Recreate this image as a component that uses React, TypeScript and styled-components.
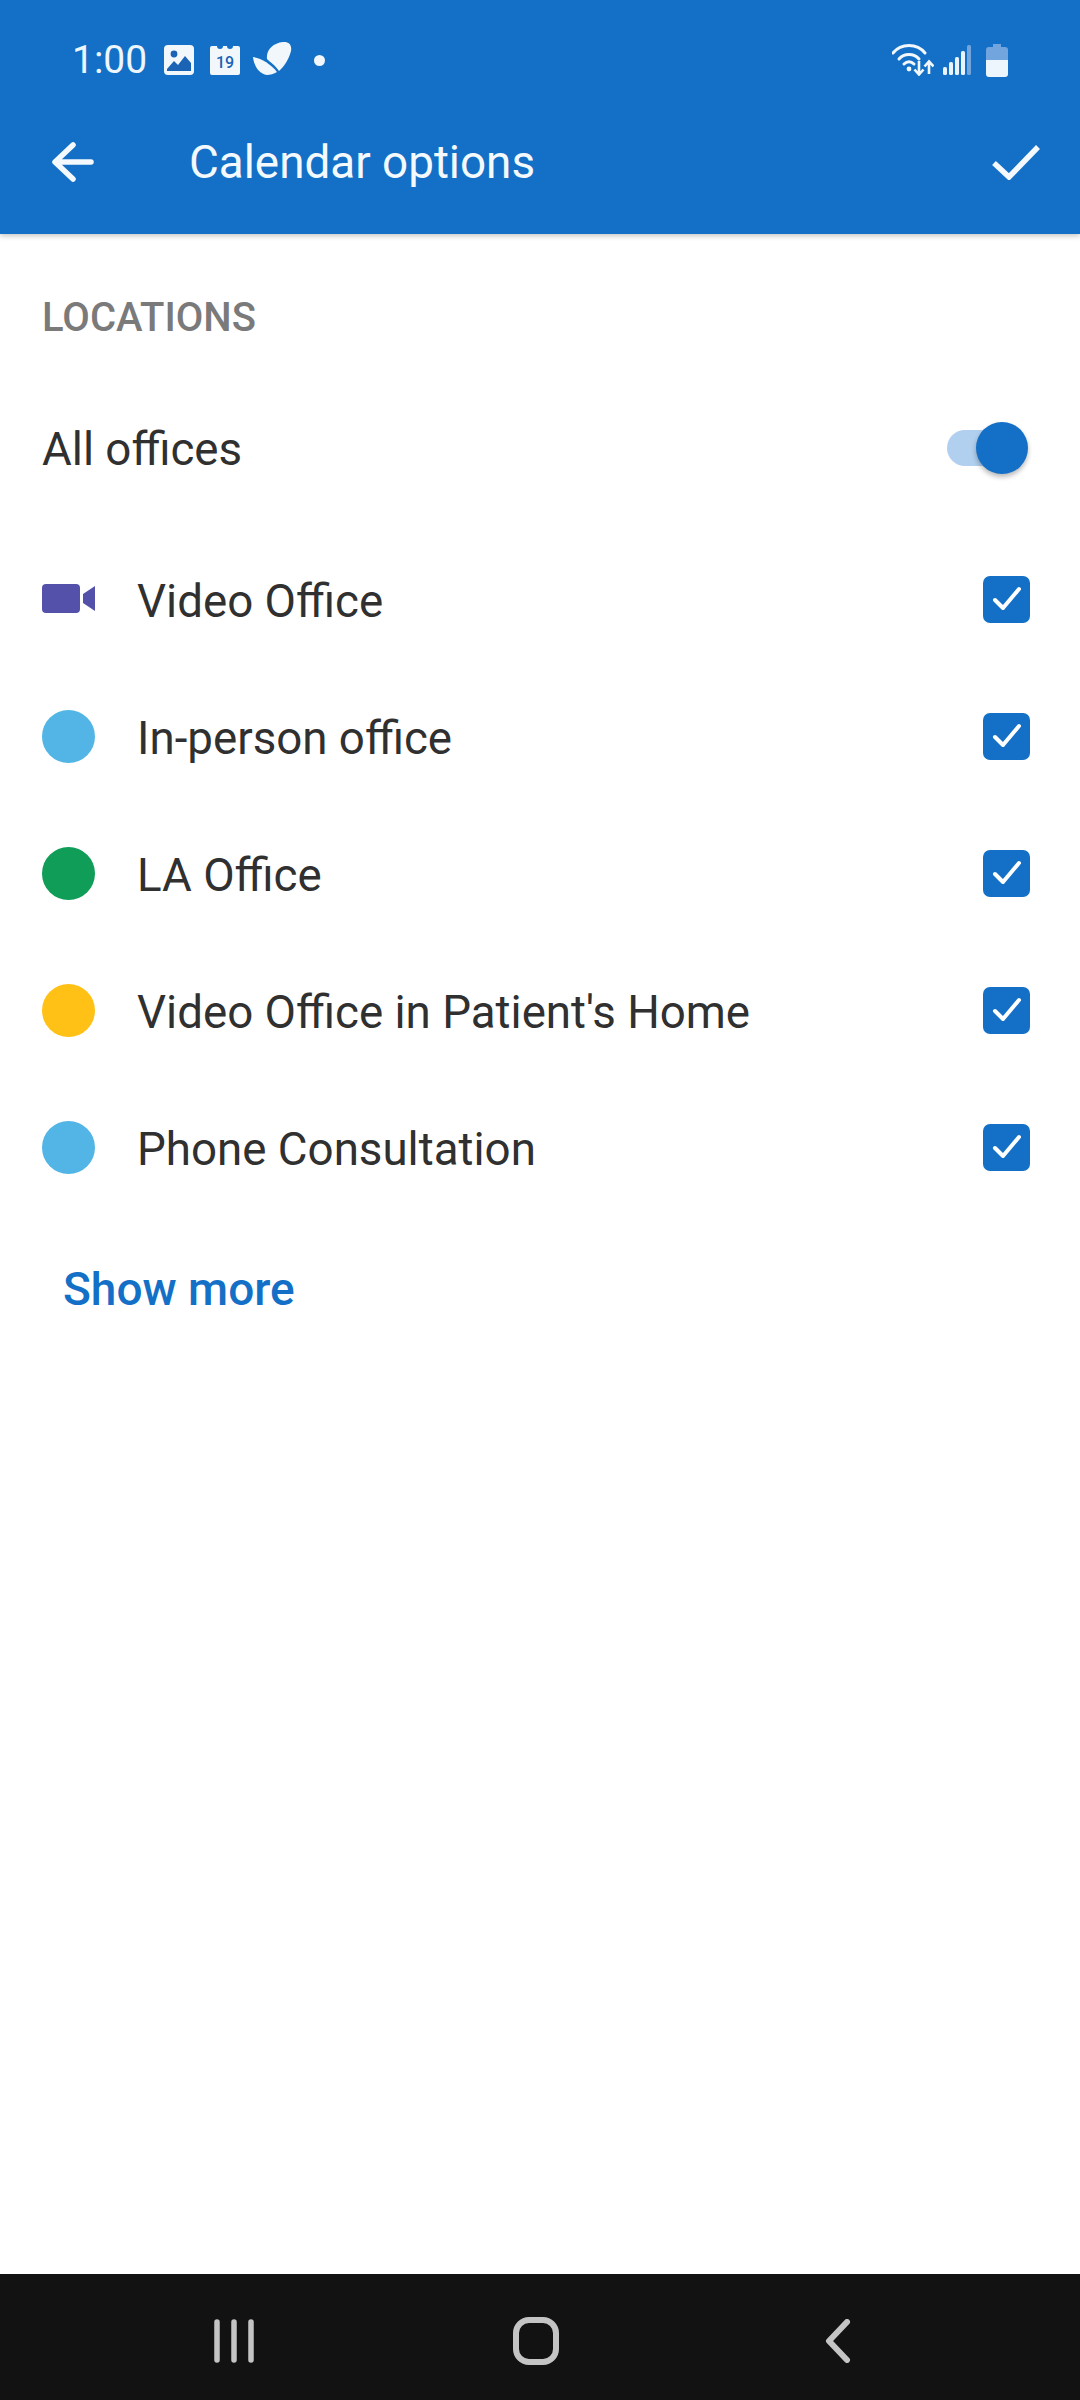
import React from 'react';
import styled, { createGlobalStyle } from 'styled-components';

const Global = createGlobalStyle`
    html, body {
        margin: 0;
        padding: 0;
        background: #ffffff;
    }
    body {
        font-family: Roboto, "Liberation Sans", sans-serif;
    }
`;

const locations = [
    { name: 'Video Office', color: '#5451ab', video: true },
    { name: 'In-person office', color: '#52b5e5' },
    { name: 'LA Office', color: '#0f9d58' },
    { name: "Video Office in Patient's Home", color: '#ffc116' },
    { name: 'Phone Consultation', color: '#52b5e5' },
];

function App() {
    return (
        <Screen>
            <Global />
            <Header>
                <StatusBar>
                    <Time>1:00</Time>
                    <NoticeIcons>
                        <svg width="30" height="30" viewBox="0 0 30 30">
                            <rect width="30" height="30" rx="4" fill="#f2f7fc" />
                            <circle cx="10" cy="9" r="3.4" fill="#1a63b5" />
                            <path d="M3 24 L10 16 L14 20 L21 11 L27 18 V26 H3 Z" fill="#1a63b5" />
                        </svg>
                        <CalendarNotice>
                            <svg width="30" height="30" viewBox="0 0 30 30">
                                <path d="M2 1 H7 a3 3 0 0 0 6 0 H17 a3 3 0 0 0 6 0 H28 a2 2 0 0 1 2 2 V28 a2 2 0 0 1 -2 2 H2 a2 2 0 0 1 -2 -2 V3 a2 2 0 0 1 2 -2 Z" fill="#f2f7fc" />
                            </svg>
                            <CalendarDay>19</CalendarDay>
                        </CalendarNotice>
                        <LeafIcon width="39" height="33" viewBox="0 0 39 33">
                            <path d="M14 17 C13 8 20 1 30 0 C36 -0.5 39 3 38 9 C36 17 31 25 26 29 C23 24 17 20 14 17 Z" fill="#f2f7fc" />
                            <path d="M0 15 C8 16 18 22 24 30 C21 32 17 33 14 33 C6 32 1 24 0 15 Z" fill="#f2f7fc" />
                        </LeafIcon>
                        <NoticeDot />
                    </NoticeIcons>
                    <SystemIcons>
                        <svg width="42" height="32" viewBox="0 0 42 32">
                            <g fill="none" stroke="#f2f7fc" strokeWidth="3" strokeLinecap="round">
                                <path d="M1 9 C9 -1 25 -1 33 9" />
                                <path d="M7 15 C12 9 22 9 27 15" />
                                <path d="M12 20 C15 17 19 17 22 20" />
                            </g>
                            <circle cx="17" cy="25" r="2.4" fill="#f2f7fc" />
                            <g fill="none" stroke="#f2f7fc" strokeWidth="2.6">
                                <path d="M27 17 V30 M22.5 25.5 L27 30.5 L31.5 25.5" />
                                <path d="M37 30 V18 M32.5 22.5 L37 17.5 L41.5 22.5" />
                            </g>
                        </svg>
                        <svg width="28" height="31" viewBox="0 0 28 31">
                            <rect x="0" y="22" width="4" height="8" rx="1.5" fill="#eaf3fb" />
                            <rect x="6" y="17" width="4" height="13" rx="1.5" fill="#eaf3fb" />
                            <rect x="12" y="12" width="4" height="18" rx="1.5" fill="#eaf3fb" />
                            <rect x="18" y="6" width="4" height="24" rx="1.5" fill="#eaf3fb" />
                            <rect x="24" y="0" width="4" height="30" rx="1.5" fill="#72a5de" />
                        </svg>
                        <svg width="22" height="33" viewBox="0 0 22 33">
                            <path d="M7 0 H15 V3 H19 a3 3 0 0 1 3 3 V16 H0 V6 a3 3 0 0 1 3 -3 H7 Z" fill="#72a5de" />
                            <path d="M0 16 H22 V30 a3 3 0 0 1 -3 3 H3 a3 3 0 0 1 -3 -3 Z" fill="#eef6fd" />
                        </svg>
                    </SystemIcons>
                </StatusBar>
                <Toolbar>
                    <BackButton width="42" height="42" viewBox="0 0 42 42">
                        <path d="M39 21 H4 M21 4 L3 21 L21 38" />
                    </BackButton>
                    <Title>Calendar options</Title>
                    <DoneButton width="48" height="36" viewBox="0 0 48 36">
                        <path d="M2 19 L17 33 L46 3" />
                    </DoneButton>
                </Toolbar>
            </Header>

            <Content>
                <SectionLabel>LOCATIONS</SectionLabel>
                <AllRow>
                    <AllLabel>All offices</AllLabel>
                    <Switch>
                        <SwitchKnob />
                    </Switch>
                </AllRow>
                <LocationList>
                    {locations.map((loc) => (
                        <LocationRow key={loc.name}>
                            <LocationMark>
                                {loc.video ? (
                                    <svg width="54" height="30" viewBox="0 0 54 30">
                                        <rect x="0" y="0" width="38" height="29" rx="4" fill={loc.color} />
                                        <path d="M41 10 L53 2 V27 L41 19 Z" fill={loc.color} />
                                    </svg>
                                ) : (
                                    <Dot $color={loc.color} />
                                )}
                            </LocationMark>
                            <LocationName>{loc.name}</LocationName>
                            <Checkbox>
                                <svg width="30" height="26" viewBox="0 0 30 26">
                                    <path d="M3 14 L11 22 L27 3" />
                                </svg>
                            </Checkbox>
                        </LocationRow>
                    ))}
                </LocationList>
                <ShowMore>Show more</ShowMore>
            </Content>

            <NavBar>
                <NavSlot>
                    <svg width="40" height="44" viewBox="0 0 40 44" fill="none" stroke="#c4c4c4" strokeWidth="5.5" strokeLinecap="round">
                        <path d="M3 3 V41 M20 3 V41 M37 3 V41" />
                    </svg>
                </NavSlot>
                <NavSlot>
                    <svg width="46" height="48" viewBox="0 0 46 48" fill="none" stroke="#c4c4c4" strokeWidth="6">
                        <rect x="3" y="3" width="40" height="42" rx="13" />
                    </svg>
                </NavSlot>
                <NavSlot>
                    <svg width="26" height="44" viewBox="0 0 26 44" fill="none" stroke="#c4c4c4" strokeWidth="6" strokeLinecap="round" strokeLinejoin="round">
                        <path d="M22 3 L4 22 L22 41" />
                    </svg>
                </NavSlot>
            </NavBar>
        </Screen>
    );
}

const Screen = styled.div`
    display: flex;
    flex-direction: column;
    width: 1080px;
    height: 2400px;
    background: #ffffff;
    overflow: hidden;
`;

// header
const Header = styled.header`
    flex: none;
    height: 234px;
    background: #1370c6;
    box-shadow: 0 2px 5px rgba(0, 0, 0, 0.22);
    position: relative;
`;
const StatusBar = styled.div`
    display: flex;
    align-items: center;
    height: 120px;
    padding: 0 72px 0 72px;
    box-sizing: border-box;
`;
const Time = styled.span`
    width: 92px;
    font-size: 39px;
    color: #eef6fd;
`;
const NoticeIcons = styled.div`
    display: flex;
    align-items: center;
    gap: 16px;
    flex: 1;
`;
const CalendarNotice = styled.div`
    position: relative;
    width: 30px;
    height: 30px;
    margin-right: -3px;
`;
const CalendarDay = styled.span`
    position: absolute;
    left: 0;
    right: 0;
    top: 9px;
    text-align: center;
    font-size: 16px;
    font-weight: 500;
    line-height: 18px;
    color: #1a63b5;
`;
const LeafIcon = styled.svg`
    margin-top: -3px;
`;
const NoticeDot = styled.span`
    width: 11px;
    height: 11px;
    margin-left: 6px;
    border-radius: 50%;
    background: #f2f7fc;
`;
const SystemIcons = styled.div`
    display: flex;
    align-items: center;
    gap: 9px;

    & svg:last-child {
        margin-left: 6px;
    }
`;
const Toolbar = styled.div`
    display: flex;
    align-items: center;
    height: 84px;
    padding: 0 40px 0 52px;
`;
const BackButton = styled.svg`
    flex: none;
    fill: none;
    stroke: #f4f9fd;
    stroke-width: 5.5;
    stroke-linecap: round;
    stroke-linejoin: round;
`;
const Title = styled.h1`
    flex: 1;
    margin: 0 0 0 95px;
    font-size: 45.8px;
    font-weight: 400;
    color: #f4f9fd;
`;
const DoneButton = styled.svg`
    flex: none;
    fill: none;
    stroke: #f4f9fd;
    stroke-width: 5.5;
`;

// content
const Content = styled.main`
    flex: 1;
    display: flex;
    flex-direction: column;
    padding: 62px 50px 0 42px;
`;
const SectionLabel = styled.div`
    font-size: 40px;
    line-height: 44px;
    font-weight: 500;
    color: #7a7a7a;
`;
const AllRow = styled.div`
    display: flex;
    align-items: center;
    justify-content: space-between;
    height: 80px;
    margin-top: 68px;
`;
const AllLabel = styled.span`
    padding-top: 2px;
    font-size: 45.7px;
    color: #303030;
`;
const Switch = styled.div`
    position: relative;
    width: 68px;
    height: 36px;
    margin-right: 15px;
    border-radius: 18px;
    background: #b1cfee;
`;
const SwitchKnob = styled.span`
    position: absolute;
    right: -13px;
    top: -8px;
    width: 52px;
    height: 52px;
    border-radius: 50%;
    background: #1370c6;
    box-shadow: 0 3px 5px rgba(0, 0, 0, 0.28);
`;
const LocationList = styled.div`
    display: flex;
    flex-direction: column;
    margin-top: 44px;
`;
const LocationRow = styled.div`
    display: flex;
    align-items: center;
    height: 137px;
`;
const LocationMark = styled.div`
    display: flex;
    align-items: center;
    width: 95px;
    flex: none;
    margin-bottom: 3px;
`;
const Dot = styled.span<{ $color: string }>`
    width: 53px;
    height: 53px;
    border-radius: 50%;
    background: ${(p) => p.$color};
`;
const LocationName = styled.span`
    flex: 1;
    padding-top: 2px;
    font-size: 45.7px;
    color: #303030;
`;
const Checkbox = styled.div`
    display: flex;
    align-items: center;
    justify-content: center;
    width: 47px;
    height: 47px;
    margin-bottom: 3px;
    border-radius: 7px;
    background: #1370c6;

    & svg {
        fill: none;
        stroke: #ffffff;
        stroke-width: 4;
        stroke-linecap: round;
        stroke-linejoin: round;
    }
`;
const ShowMore = styled.div`
    margin: 45px 0 0 21px;
    font-size: 46px;
    font-weight: 500;
    color: #1370c6;
`;

// nav bar
const NavBar = styled.nav`
    flex: none;
    display: grid;
    grid-template-columns: repeat(3, 302px);
    justify-content: center;
    align-items: center;
    height: 126px;
    background: #121212;
    padding: 8px 9px 0 0;
    box-sizing: border-box;
`;
const NavSlot = styled.div`
    display: flex;
    justify-content: center;
`;

export default App;
